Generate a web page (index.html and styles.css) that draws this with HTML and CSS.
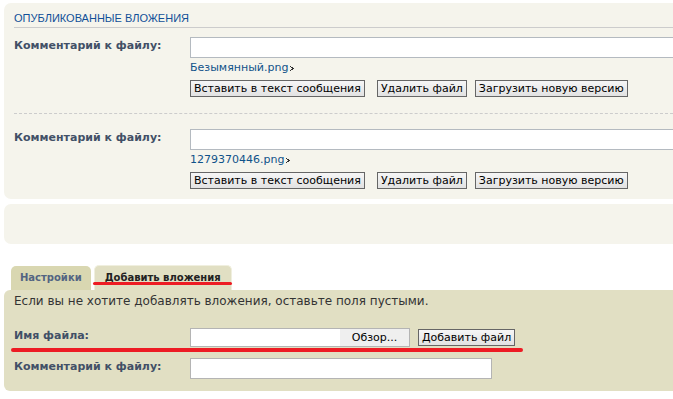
FILE: index.html
```html
<!DOCTYPE html>
<html lang="ru">

<head>
    <meta charset="UTF-8">
    <title>Вложения</title>
    <link rel="stylesheet" href="styles.css">
</head>

<body>
    <!-- Published attachments -->
    <div class="panel panel-top">
        <h3>Опубликованные вложения</h3>

        <div class="attach-row">
            <div class="label">Комментарий к файлу:</div>
            <div class="field">
                <input type="text" class="wide-input">
                <div class="file-link"><a href="#">Безымянный.png</a><svg class="arrow" width="4" height="5" viewBox="0 0 4 5"><rect x="0" y="0" width="1" height="1"/><rect x="1" y="1" width="2" height="1"/><rect x="2" y="2" width="2" height="1"/><rect x="1" y="3" width="2" height="1"/><rect x="0" y="4" width="1" height="1"/></svg></div>
                <div class="buttons">
                    <button class="btn">Вставить в текст сообщения</button>
                    <button class="btn">Удалить файл</button>
                    <button class="btn">Загрузить новую версию</button>
                </div>
            </div>
        </div>

        <div class="attach-row dashed">
            <div class="label">Комментарий к файлу:</div>
            <div class="field">
                <input type="text" class="wide-input">
                <div class="file-link"><a href="#">1279370446.png</a><svg class="arrow" width="4" height="5" viewBox="0 0 4 5"><rect x="0" y="0" width="1" height="1"/><rect x="1" y="1" width="2" height="1"/><rect x="2" y="2" width="2" height="1"/><rect x="1" y="3" width="2" height="1"/><rect x="0" y="4" width="1" height="1"/></svg></div>
                <div class="buttons">
                    <button class="btn">Вставить в текст сообщения</button>
                    <button class="btn">Удалить файл</button>
                    <button class="btn">Загрузить новую версию</button>
                </div>
            </div>
        </div>
    </div>

    <div class="panel panel-empty"></div>

    <!-- Tabs -->
    <div class="tabs">
        <a href="#" class="tab">Настройки</a>
        <a href="#" class="tab active">Добавить вложения</a>
        <span class="mark mark-tab"></span>
    </div>

    <div class="tab-panel">
        <p class="hint">Если вы не хотите добавлять вложения, оставьте поля пустыми.</p>

        <div class="form-row file-row">
            <div class="label">Имя файла:</div>
            <div class="file-input">
                <span class="file-name"></span>
                <span class="file-browse">Обзор...</span>
            </div>
            <button class="btn add-btn">Добавить файл</button>
        </div>
        <span class="mark mark-file"></span>

        <div class="form-row comment-row">
            <div class="label">Комментарий к файлу:</div>
            <input type="text" class="comment-input">
        </div>
    </div>
</body>

</html>
```

FILE: styles.css
```css
/* Reset and Global Styles */
* {
    margin: 0;
    padding: 0;
    box-sizing: border-box;
}

body {
    font-family: "DejaVu Sans", Verdana, sans-serif;
    font-size: 11px;
    color: #333;
    background-color: #fff;
    overflow: hidden;
}

a {
    color: #105289;
    text-decoration: none;
}

/* Panels */
.panel {
    margin-left: 4px;
    background-color: #f5f4ec;
    border-radius: 7px 0 0 7px;
    overflow: hidden;
}

.panel-top {
    margin-top: 3px;
    padding: 9px 0 10px 10px;
}

.panel h3 {
    font-family: "Liberation Sans", Arial, sans-serif;
    font-size: 11px;
    font-weight: normal;
    text-transform: uppercase;
    color: #115098;
    border-bottom: 1px solid #ccc;
    padding-bottom: 2px;
    line-height: 13px;
}

.panel-empty {
    margin-top: 5px;
    height: 40px;
}

/* Attachment rows */
.attach-row {
    display: flex;
    padding-top: 9px;
    padding-bottom: 16px;
}

.attach-row.dashed {
    border-top: 1px dashed #ccc;
    padding-top: 15px;
    padding-bottom: 0;
}

.label {
    width: 176px;
    flex-shrink: 0;
    font-weight: bold;
    color: #425067;
    line-height: 14px;
    padding-top: 2px;
}

.field {
    display: flex;
    flex-direction: column;
}

.wide-input {
    width: 520px;
    height: 21px;
    border: 1px solid #b4bac0;
    background-color: #fff;
}

.file-link {
    display: flex;
    align-items: center;
    gap: 2px;
    height: 15px;
    margin-top: 2px;
    line-height: 15px;
}

.arrow {
    fill: #333;
    margin-top: 1px;
}

.buttons {
    display: flex;
    gap: 8px;
    margin-top: 5px;
}

.btn {
    font-family: "DejaVu Sans", Verdana, sans-serif;
    font-size: 11px;
    color: #000;
    height: 17px;
    padding: 0 3px;
    border: 1px solid #666;
    background: linear-gradient(#f6f6f6, #e2e2e2);
    line-height: 15px;
}

.buttons .btn:nth-child(2) {
    margin-left: 4px;
}

/* Tabs */
.tabs {
    position: relative;
    display: flex;
    align-items: flex-end;
    gap: 3px;
    margin-top: 21px;
    padding-left: 11px;
}

.tab {
    font-size: 10px;
    font-weight: bold;
    color: #536482;
    background-color: #d9d7b1;
    border-radius: 5px 5px 0 0;
    padding: 6px 9px 6px;
    line-height: 12px;
}

.tab.active {
    color: #222;
    background-color: #e1dfc3;
    border: 1px solid #f0efdf;
    border-bottom: none;
    padding: 6px 10px 6px;
}

.tab-panel {
    position: relative;
    margin-left: 4px;
    background-color: #e1dfc3;
    border-radius: 6px 0 0 6px;
    padding: 4px 10px 12px;
}

.hint {
    font-size: 12px;
    color: #333;
    line-height: 15px;
}

.form-row {
    display: flex;
    align-items: flex-start;
}

.file-row {
    margin-top: 19px;
}

.file-row .label {
    padding-top: 1px;
}

.comment-row {
    margin-top: 11px;
}

.comment-row .label {
    padding-top: 2px;
}

.file-input {
    display: flex;
    width: 220px;
    height: 19px;
    border: 1px solid #b4b4b4;
    background-color: #fff;
}

.file-name {
    flex: 1;
}

.file-browse {
    width: 69px;
    background-color: #efefef;
    text-align: center;
    line-height: 17px;
    color: #000;
}

.add-btn {
    margin-left: 8px;
    margin-top: 1px;
}

.comment-input {
    width: 302px;
    height: 21px;
    border: 1px solid #b4b4b4;
    background-color: #fff;
}

/* Red annotation strokes */
.mark {
    position: absolute;
    height: 4px;
    background-color: #ed1c24;
    border-radius: 2px;
}

.mark-tab {
    left: 93px;
    top: 17px;
    width: 139px;
    height: 3px;
}

.mark-file {
    left: 7px;
    top: 58px;
    width: 512px;
}
```
